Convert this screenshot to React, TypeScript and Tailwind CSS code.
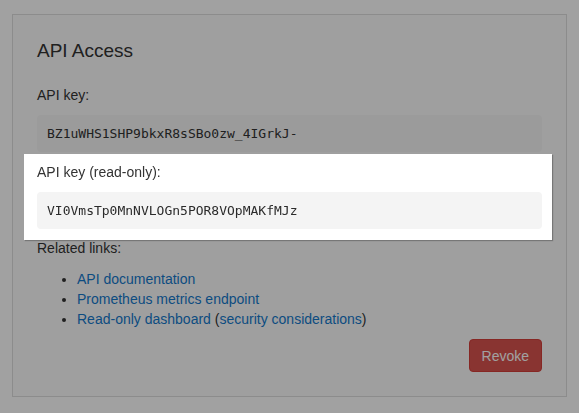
import React from "react";

export default function App() {
  return (
    <div
      className="min-h-[413px] w-full bg-white pl-[12px] pr-[12px] pt-[14px] pb-[15px] text-[14px] leading-[20px] text-[#333]"
      style={{ fontFamily: '"Liberation Sans", Arial, sans-serif' }}
    >
      <div className="fixed inset-0 z-10 bg-[rgba(0,0,0,0.37)]" />
      <div className="border border-[#dedede] bg-[#fcfcfc] p-[24px]">
        <h2 className="text-[19px] leading-[24px] text-[#333]">API Access</h2>
        <div className="mt-[22px]">API key:</div>
        <div
          className="mt-[10px] flex h-[37px] items-center rounded-[4px] bg-[#f5f5f5] px-[10px] text-[13px] text-[#333]"
          style={{ fontFamily: '"DejaVu Sans Mono", Menlo, monospace' }}
        >
          BZ1uWHS1SHP9bkxR8sSBo0zw_4IGrkJ-
        </div>
        <div className="relative z-20 mt-[10px]">
          <div className="absolute -left-[13px] -right-[10px] -top-[8px] -bottom-[11px] -z-10 bg-white shadow-[1px_1px_1px_rgba(0,0,0,0.25)]" />
          <div>API key (read-only):</div>
          <div
            className="mt-[10px] flex h-[37px] items-center rounded-[4px] bg-[#f4f4f4] px-[10px] text-[13px] text-[#2b2b2b]"
            style={{ fontFamily: '"DejaVu Sans Mono", Menlo, monospace' }}
          >
            VI0VmsTp0MnNVLOGn5POR8VOpMAKfMJz
          </div>
        </div>
        <div className="mt-[9px]">Related links:</div>
        <ul className="mt-[11px] list-disc pl-[40px]">
          <li>
            <a className="text-[#1479cc]" href="#">API documentation</a>
          </li>
          <li>
            <a className="text-[#1479cc]" href="#">Prometheus metrics endpoint</a>
          </li>
          <li>
            <a className="text-[#1479cc]" href="#">Read-only dashboard</a> (
            <a className="text-[#1479cc]" href="#">security considerations</a>)
          </li>
        </ul>
        <div className="mt-[10px] flex justify-end">
          <button className="h-[33px] rounded-[4px] border border-[#d43f3a] bg-[#d9534f] px-[12px] text-[14px] text-white">
            Revoke
          </button>
        </div>
      </div>
    </div>
  );
}
